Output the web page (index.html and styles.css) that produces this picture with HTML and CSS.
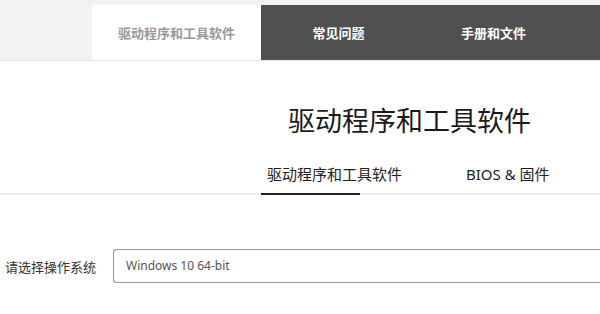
FILE: index.html
```html
<!DOCTYPE html>
<html lang="zh">
<head>
    <meta charset="UTF-8">
    <title>驱动程序和工具软件</title>
    <link rel="stylesheet" href="styles.css">
</head>
<body>
    <div class="top-bar">
        <div class="top-tab active">驱动程序和工具软件</div>
        <div class="top-tabs-dark">
            <div class="top-tab">常见问题</div>
            <div class="top-tab">手册和文件</div>
        </div>
    </div>

    <h1 class="page-title">驱动程序和工具软件</h1>

    <div class="sub-tabs">
        <div class="sub-tab active">驱动程序和工具软件</div>
        <div class="sub-tab">BIOS &amp; 固件</div>
    </div>

    <div class="os-row">
        <label class="os-label" for="os">请选择操作系统</label>
        <div class="os-select" id="os">Windows 10 64-bit</div>
    </div>
</body>
</html>
```

FILE: styles.css
```css
body {
    margin: 0;
    width: 600px;
    height: 314px;
    overflow: hidden;
    background: #fff;
    font-family: "Noto Sans", "Noto Sans CJK SC", sans-serif;
    color: #222;
}
.top-bar {
    display: flex;
    height: 55px;
    padding: 5px 0 0 92px;
    background-color: #f2f2f2;
    border-bottom: 1px solid #e8e8e8;
}
.top-tab {
    display: flex;
    align-items: center;
    justify-content: center;
    width: 155px;
    font-size: 13px;
    font-weight: bold;
    color: #fff;
}
.top-tab.active {
    width: 169px;
    background-color: #fff;
    color: #999;
}
.top-tabs-dark {
    display: flex;
    flex: 1;
    background-color: #505050;
}
.page-title {
    margin: 42px 0 0 288px;
    font-size: 27px;
    line-height: 36px;
    font-weight: normal;
    color: #1a1a1a;
}
.sub-tabs {
    display: flex;
    margin-top: 25px;
    padding-left: 261px;
    border-bottom: 2px solid #efefef;
}
.sub-tab {
    padding: 0 0 9px 6px;
    font-size: 15px;
    line-height: 20px;
    white-space: nowrap;
    color: #222;
}
.sub-tab.active {
    width: 93px;
    margin-bottom: -2px;
    border-bottom: 2px solid #222;
}
.sub-tab + .sub-tab {
    margin-left: 100px;
}
.os-row {
    display: flex;
    align-items: center;
    margin-top: 54px;
    padding-left: 5px;
}
.os-label {
    width: 108px;
    flex-shrink: 0;
    font-size: 13px;
    color: #333;
}
/* the select box runs on past the right edge, so only its left side is rounded */
.os-select {
    flex: 1;
    height: 32px;
    line-height: 32px;
    padding-left: 12px;
    border: 1px solid #999;
    border-right: none;
    border-radius: 3px 0 0 3px;
    font-size: 12px;
    color: #555;
}
```
